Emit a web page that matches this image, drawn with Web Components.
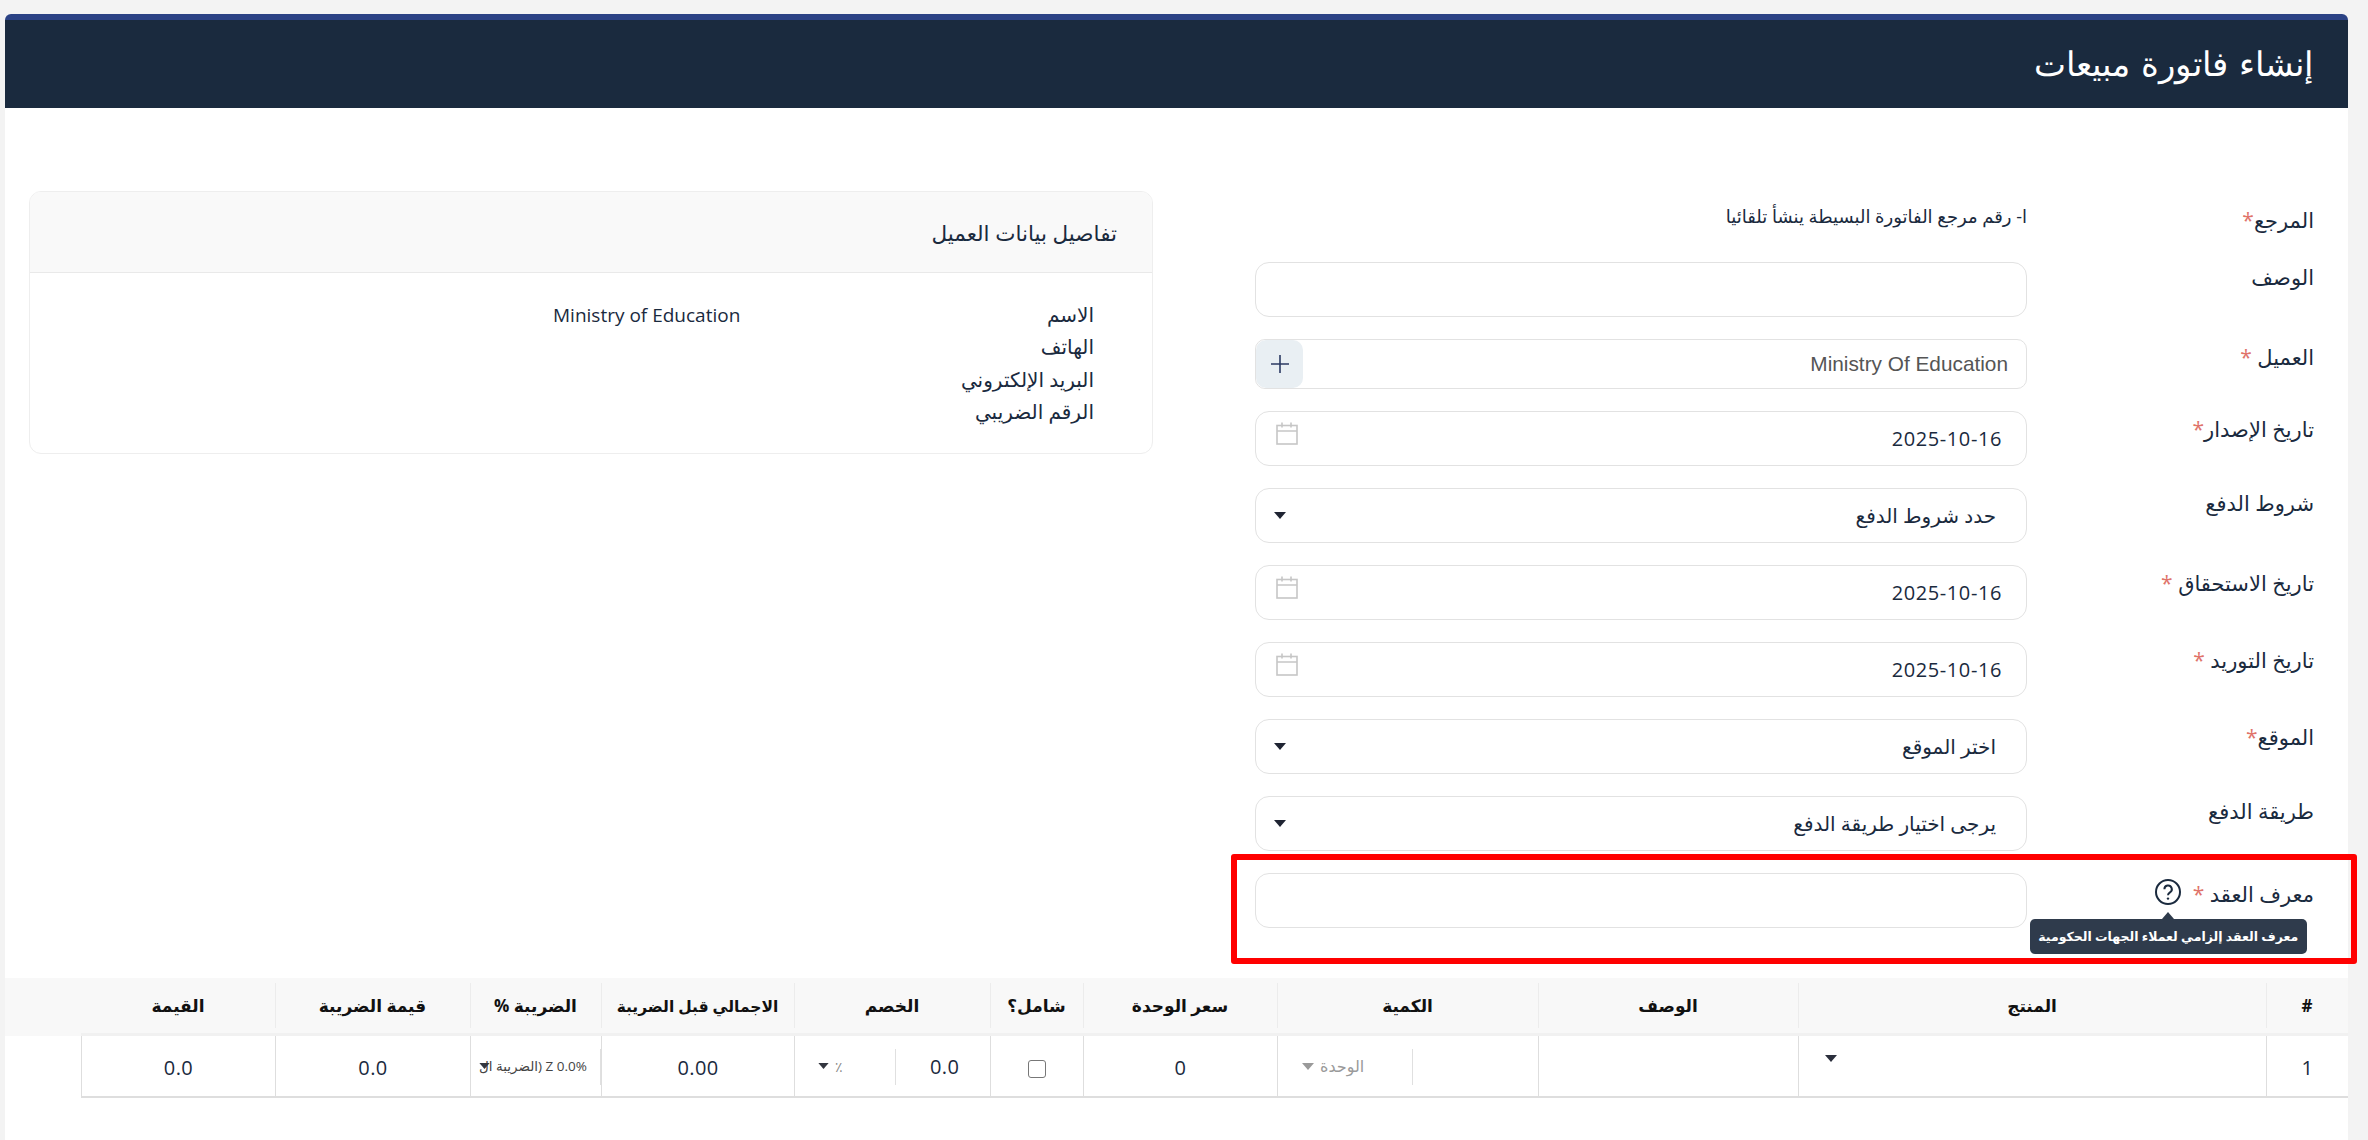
<!DOCTYPE html>
<html lang="ar" dir="rtl">
<head>
<meta charset="utf-8">
<title>إنشاء فاتورة مبيعات</title>
<style>
html,body{margin:0;height:100%;background:#f3f3f3;overflow:hidden}
body{font-family:"Open Sans","DejaVu Sans",sans-serif;color:#1a2a3e;display:flex;flex-direction:column}
</style>
</head>
<body>
<invoice-page>
  <page-title slot="title">إنشاء فاتورة مبيعات</page-title>
  <invoice-form slot="form">
    <form-row label="المرجع" star="tight" pad="14">
      <span style="display:block;font-size:18px;line-height:24px;padding-top:13px;height:36px">ا- رقم مرجع الفاتورة البسيطة ينشأ تلقائيا</span>
    </form-row>
    <form-row label="الوصف" pad="0"><field-box h="55"></field-box></form-row>
    <form-row label="العميل" star="space" pad="3"><field-box h="50" r="10" addon>Ministry Of Education</field-box></form-row>
    <form-row label="تاريخ الإصدار" star="tight" pad="3"><field-box h="55" icon="calendar">2025-10-16</field-box></form-row>
    <form-row label="شروط الدفع" pad="0"><field-box h="55" icon="caret">حدد شروط الدفع</field-box></form-row>
    <form-row label="تاريخ الاستحقاق" star="space" pad="3"><field-box h="55" icon="calendar">2025-10-16</field-box></form-row>
    <form-row label="تاريخ التوريد" star="space" pad="3"><field-box h="55" icon="calendar">2025-10-16</field-box></form-row>
    <form-row label="الموقع" star="tight" pad="3"><field-box h="55" icon="caret">اختر الموقع</field-box></form-row>
    <form-row label="طريقة الدفع" pad="0"><field-box h="55" icon="caret">يرجى اختيار طريقة الدفع</field-box></form-row>
    <form-row label="معرف العقد" star="space" pad="6" highlight>
      <help-tip slot="label-extra"></help-tip>
      <field-box h="55"></field-box>
    </form-row>
  </invoice-form>
  <customer-card slot="aside"></customer-card>
  <items-table slot="table"></items-table>
</invoice-page>
<script>
function shadow(el, html){ const r = el.attachShadow({mode:'open'}); r.innerHTML = html; return r; }

customElements.define('invoice-page', class extends HTMLElement{
  constructor(){ super(); shadow(this, `<style>
    :host{display:flex;flex-direction:column;flex:1;margin:14px 20px 0 0;margin-left:5px;background:#fff;border-top:6px solid #2b4284;border-radius:6px 6px 0 0;min-height:0}
    .top{display:grid;grid-template-columns:1059px 1124px;justify-content:space-between;padding:83px 34px 0 24px}
    .table{margin-top:50px}
  </style>
  <slot name="title"></slot>
  <div class="top"><slot name="form"></slot><div><slot name="aside"></slot></div></div>
  <div class="table"><slot name="table"></slot></div>`); }
});

customElements.define('page-title', class extends HTMLElement{
  constructor(){ super(); shadow(this, `<style>
    :host{display:flex;align-items:center;height:88px;padding:0 35px;background:#1a2a3e;color:#fff;font-family:"DejaVu Sans ExtraLight","DejaVu Sans Light","Open Sans","DejaVu Sans",sans-serif;font-size:34px;font-weight:200;box-sizing:border-box}
  </style><slot></slot>`); }
});

customElements.define('invoice-form', class extends HTMLElement{
  constructor(){ super(); shadow(this, `<style>:host{display:grid;gap:22px;align-content:start}</style><slot></slot>`); }
});

customElements.define('form-row', class extends HTMLElement{
  connectedCallback(){
    if(this.shadowRoot) return;
    const star = this.getAttribute('star');
    const starHtml = star ? `<span class="star">${star==='space'?'&nbsp;':''}*</span>` : '';
    const hl = this.hasAttribute('highlight') ? '<div class="red"></div>' : '';
    shadow(this, `<style>
      :host{display:grid;grid-template-columns:287px 772px;position:relative}
      .label{padding-top:${this.getAttribute('pad')||0}px;font-size:21px;line-height:30px;color:#1a2a3e;display:flex;align-items:flex-start}
      .star{color:#e0736a}
      .extra{margin-inline-start:12px}
      .red{position:absolute;top:-19px;right:-43px;width:1126px;height:110px;box-sizing:border-box;border:6px solid #f00;border-radius:3px;pointer-events:none}
    </style>
    <div class="label"><span>${this.getAttribute('label')}${starHtml}</span><span class="extra"><slot name="label-extra"></slot></span></div>
    <div><slot></slot></div>${hl}`);
  }
});

const ICONS = {
  calendar:`<svg width="22" height="23" viewBox="0 0 22 23" fill="none" stroke="#c6c6c6" stroke-width="1.6"><rect x="1" y="3.5" width="20" height="18.5"/><path d="M1 9h20M6 0.5v5M15 0.5v5"/></svg>`,
  caret:`<svg width="12" height="7" viewBox="0 0 12 7"><path d="M0 0h12L6 7z" fill="#1f2433"/></svg>`
};

customElements.define('field-box', class extends HTMLElement{
  connectedCallback(){
    if(this.shadowRoot) return;
    const h = this.getAttribute('h')||55, r = this.getAttribute('r')||14, icon = this.getAttribute('icon');
    const addon = this.hasAttribute('addon');
    const pad = addon ? 18 : icon==='caret' ? 30 : 24;
    shadow(this, `<style>
      :host{display:flex;align-items:center;height:${h}px;box-sizing:border-box;border:1.5px solid #e2e2e2;border-radius:${r}px;background:#fff;overflow:hidden;position:relative}
      .text{flex:1;min-width:0;padding-inline:${pad}px;font-size:${addon?'20.8px':'20px'};letter-spacing:${addon?'0':'.6px'};color:${addon?'#555':'#1a2a3e'};font-family:${addon?'"Liberation Sans",sans-serif':'inherit'}}
      .icon{display:flex;margin-inline-end:${icon==='calendar'?'20px':'18px'};margin-top:${icon==='calendar'?'-10px':'0'}}
      .add{width:47px;align-self:stretch;background:#e9eff3;display:flex;align-items:center;justify-content:center;border-radius:${r}px}
    </style>
    <div class="text"><slot></slot></div>
    ${icon?`<span class="icon">${ICONS[icon]}</span>`:''}
    ${addon?`<span class="add"><svg width="18" height="18" viewBox="0 0 18 18" stroke="#2b3a63" stroke-width="1.6"><path d="M9 0v18M0 9h18"/></svg></span>`:''}`);
  }
});

customElements.define('help-tip', class extends HTMLElement{
  constructor(){ super(); shadow(this, `<style>
    :host{display:block;position:relative;width:26px;height:26px}
    svg{display:block}
    .tip{position:absolute;top:40px;left:-125px;width:277px;height:35px;box-sizing:border-box;background:#2f3b4c;border-radius:5px;color:#fff;font-size:12.5px;font-weight:700;line-height:35px;text-align:center;white-space:nowrap}
    .tip::before{content:"";position:absolute;top:-7px;left:132px;border:6.5px solid transparent;border-top:0;border-bottom:7px solid #2f3b4c}
  </style>
  <svg width="26" height="26" viewBox="0 0 26 26" fill="none" stroke="#1a2a3e"><circle cx="13" cy="13" r="12" stroke-width="2"/><path d="M9.4 10.2a3.7 3.7 0 1 1 5.6 3.1c-1.3.8-2 1.5-2 2.9" stroke-width="2"/><circle cx="13" cy="19.6" r="1.2" fill="#1a2a3e" stroke="none"/></svg>
  <div class="tip">معرف العقد إلزامي لعملاء الجهات الحكومية</div>`); }
});

customElements.define('customer-card', class extends HTMLElement{
  constructor(){ super(); shadow(this, `<style>
    :host{display:block;border:1.5px solid #eeeeee;border-radius:12px;overflow:hidden;height:263px;box-sizing:border-box;background:#fff}
    .head{height:81px;background:#f9f9f9;border-bottom:1.5px solid #e9e9e9;display:flex;align-items:center;padding:0 35px;font-size:21.5px;color:#1a2a3e;box-sizing:border-box}
    .body{padding:26px 58px 0 0;display:grid;grid-template-columns:354px auto;font-size:19px;line-height:32.3px;color:#1a2a3e}
    .labels span{display:block;font-size:20px}
  </style>
  <div class="head">تفاصيل بيانات العميل</div>
  <div class="body"><div class="labels"><span>الاسم</span><span>الهاتف</span><span>البريد الإلكتروني</span><span>الرقم الضريبي</span></div><div dir="ltr" style="text-align:right;width:187px;white-space:nowrap">Ministry of Education</div></div>`); }
});

customElements.define('items-table', class extends HTMLElement{
  constructor(){ super();
    const widths=[82,468,260,261,194,93,196,193,131,195,194,76];
    const heads=['#','المنتج','الوصف','الكمية','سعر الوحدة','شامل؟','الخصم','الاجمالي قبل الضريبة','الضريبة %','قيمة الضريبة','القيمة',''];
    const caret=(c,w=12,h=7)=>`<svg width="${w}" height="${h}" viewBox="0 0 12 7"><path d="M0 0h12L6 7z" fill="${c}"/></svg>`;
    shadow(this, `<style>
      :host{display:block}
      table{border-collapse:separate;border-spacing:0;table-layout:fixed;width:2343px;font-size:20px;letter-spacing:.4px;color:#1a2a3e}
      thead th{height:58px;padding:0;box-sizing:border-box;background:#f8f8f8;font-size:17px;font-weight:700;letter-spacing:0;color:#111;position:relative;border-top:0;border-bottom:3px solid #f1f1f1}
      thead th.x{border-bottom-color:#f8f8f8}
      thead th.long{font-size:15.5px}
      thead th::before{content:"";position:absolute;left:0;top:5px;bottom:5px;border-left:1.5px solid #ececec}
      thead th.x::before,thead th:nth-last-child(2)::before{display:none}
      tbody td{height:62px;padding:2px 0 0;box-sizing:border-box;border-left:1.5px solid #dedede;border-bottom:2px solid #dedede;text-align:center;position:relative;vertical-align:middle}
      tbody td.x{border:0}
      .sep{position:absolute;top:13px;bottom:11px;border-left:1.5px solid #e0e0e0}
      .abs{position:absolute;top:0;bottom:0;display:flex;align-items:center;letter-spacing:0}
      input{appearance:none;-webkit-appearance:none;display:block;margin:4px auto 0;width:18px;height:18px;border:1.5px solid #777;border-radius:3px;background:#fff}
    </style>
    <table><colgroup>${widths.map(w=>`<col style="width:${w}px">`).join('')}</colgroup>
    <thead><tr>${heads.map((h,i)=>`<th class="${i==11?'x':i==7?'long':''}">${h}</th>`).join('')}</tr></thead>
    <tbody><tr>
      <td>1</td>
      <td><span class="abs" style="left:26px;top:-15px">${caret('#2b2f3c')}</span></td>
      <td></td>
      <td><span class="sep" style="left:134px"></span><span class="abs" style="left:42px;font-size:16px;color:#9a9a9a">الوحدة</span><span class="abs" style="left:24px">${caret('#9a9a9a')}</span></td>
      <td>0</td>
      <td><input type="checkbox" aria-label="شامل"></td>
      <td><span class="abs" style="left:135px;letter-spacing:.4px">0.0</span><span class="sep" style="left:100px"></span><span class="abs" style="left:40px;font-size:14px;color:#888">٪</span><span class="abs" style="left:23px">${caret('#33363f',11,6)}</span></td>
      <td>0.00</td>
      <td><span class="sep" style="right:0"></span><span class="abs" style="right:14px;font-size:13.5px;color:#444;white-space:nowrap">Z 0.0% (الضريبة ال</span><span class="abs" style="left:8px">${caret('#33363f',11,6)}</span></td>
      <td>0.0</td>
      <td>0.0</td>
      <td class="x"></td>
    </tr></tbody></table>`);
  }
});
</script>
</body>
</html>
